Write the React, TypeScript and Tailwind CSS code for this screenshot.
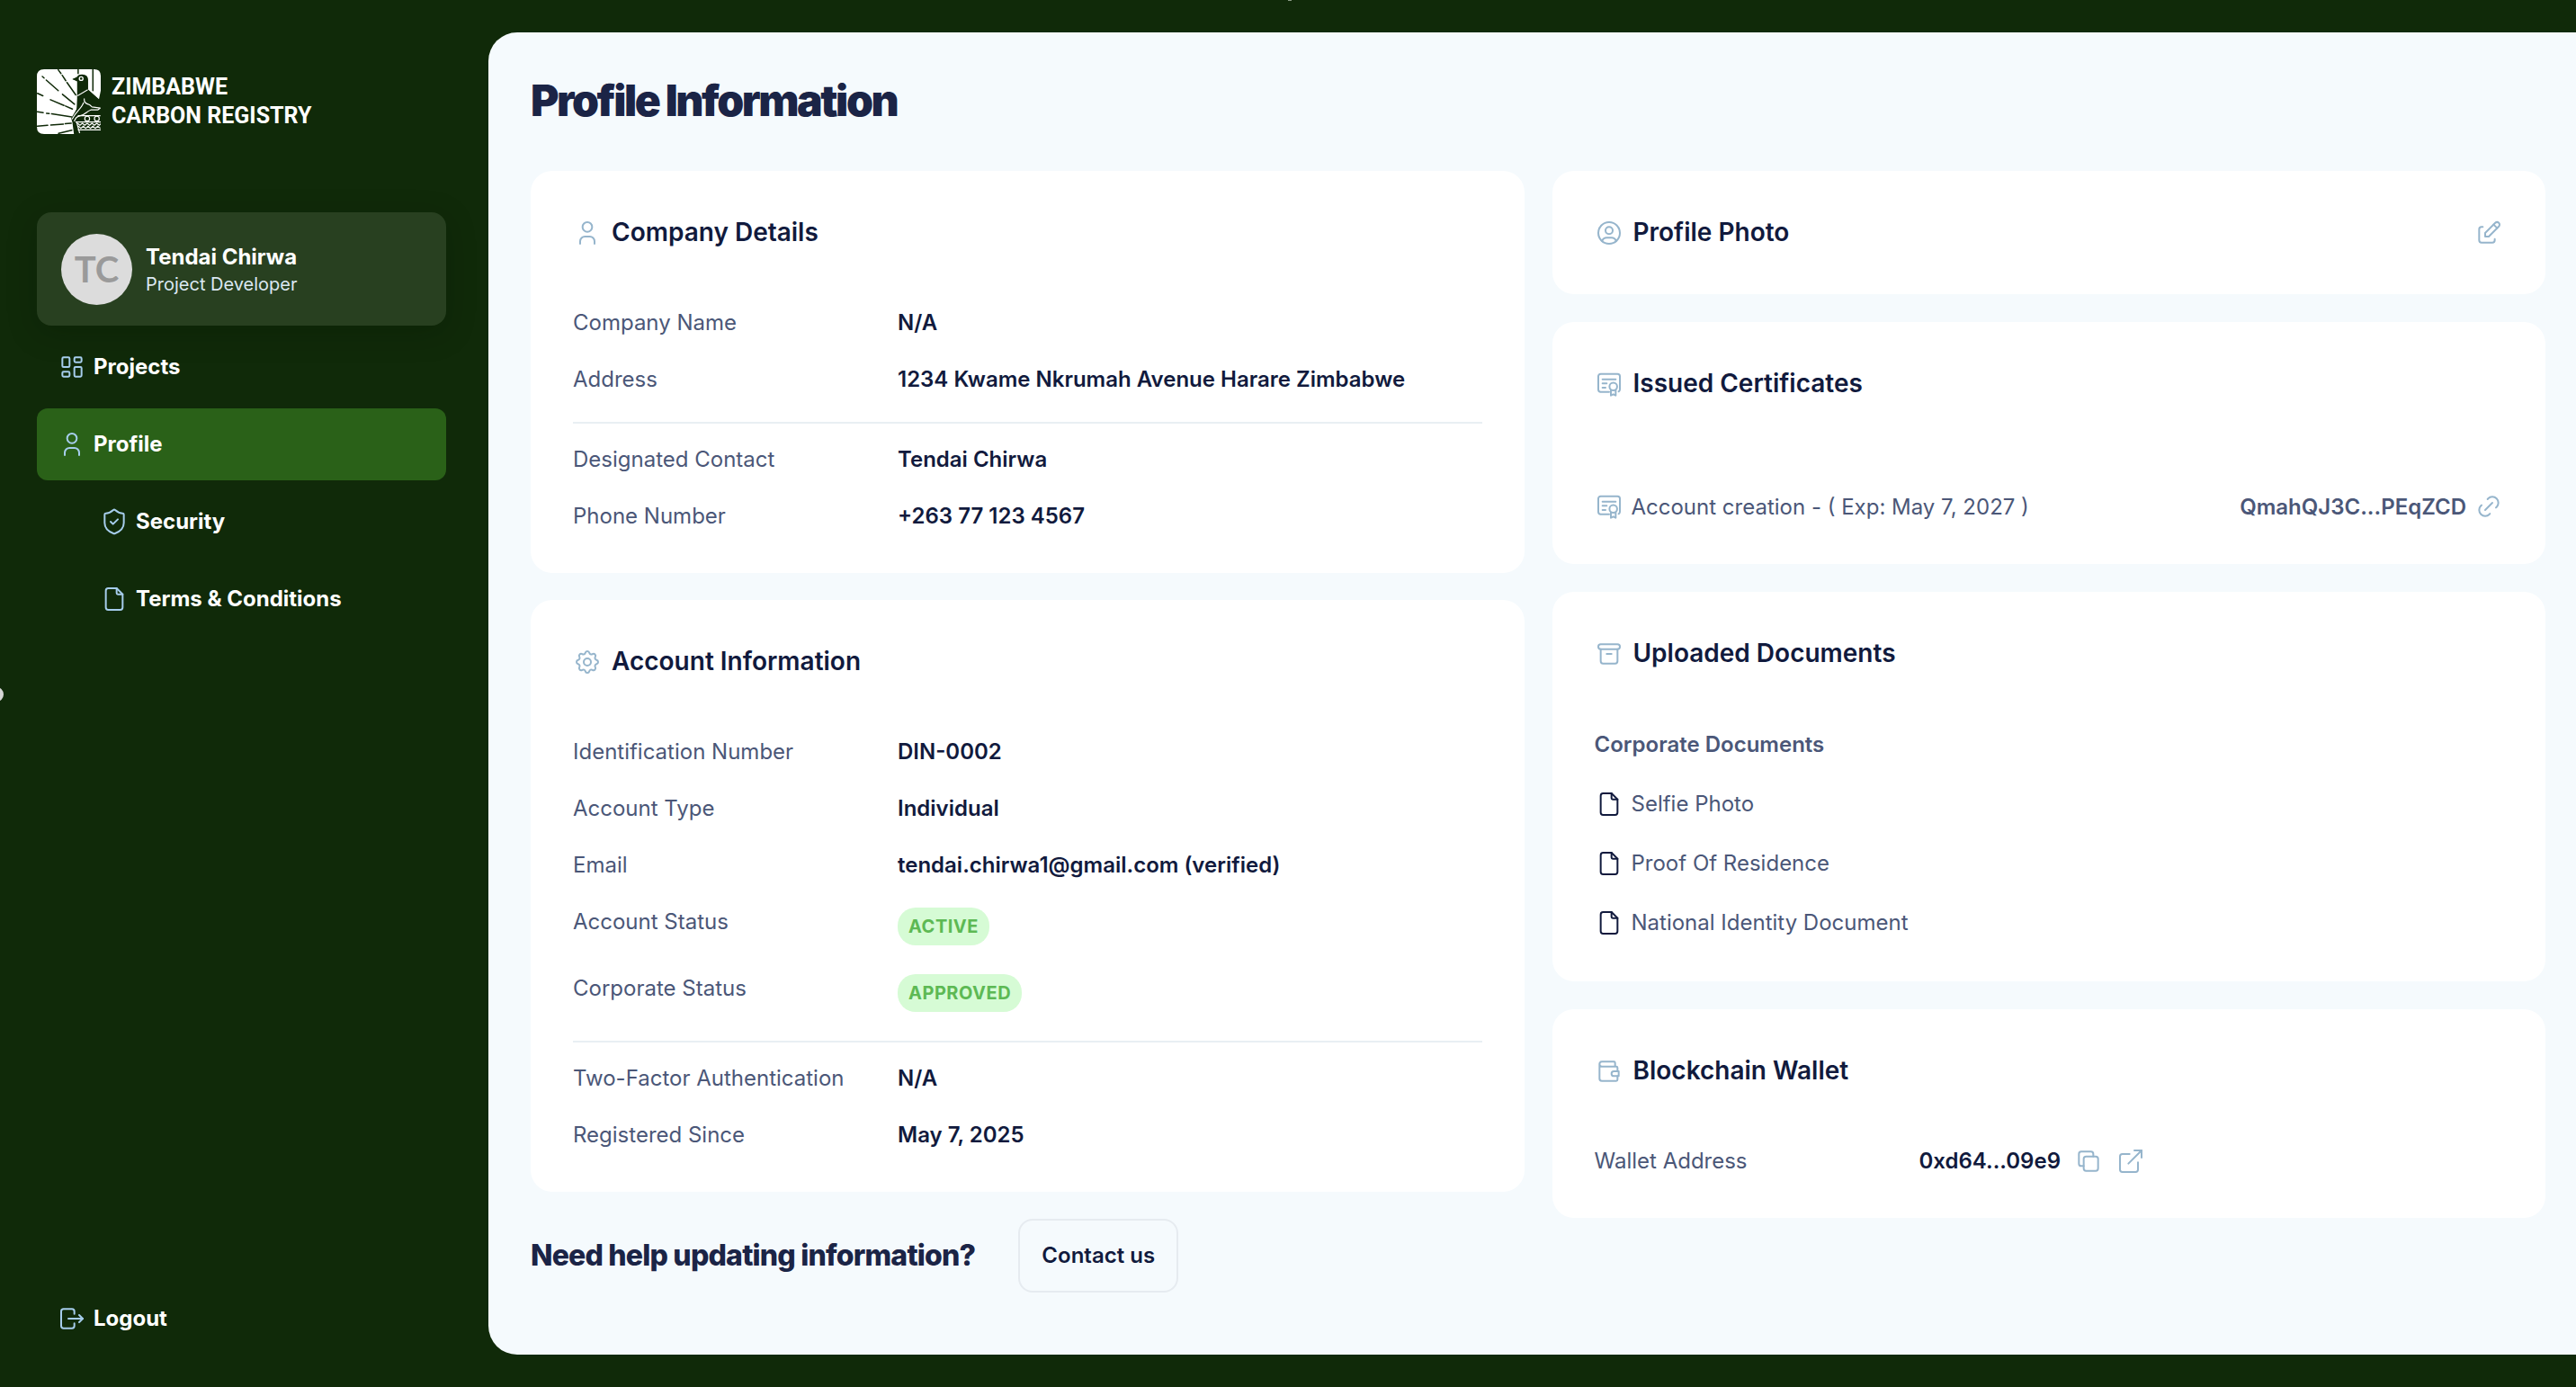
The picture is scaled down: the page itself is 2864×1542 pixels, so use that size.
import React from 'react';
import type { IconType } from 'react-icons';
import {
  TbArchive,
  TbEdit,
  TbFile,
  TbLayoutDashboard,
  TbLink,
  TbLogout,
  TbSettings,
  TbUser,
  TbUserCircle,
  TbWallet,
} from 'react-icons/tb';
import { ExternalLink, ShieldCheck } from 'lucide-react';

type IconLike = IconType | React.ComponentType<any>;

function CertificateIcon({ className }: { className?: string }) {
  return (
    <svg viewBox="0 0 24 24" fill="none" stroke="currentColor" strokeWidth="1.5" strokeLinecap="round" strokeLinejoin="round" className={className}>
      <path d="M12 18.5H5a2 2 0 0 1 -2 -2V5.500a2 2 0 0 1 2 -2h14a2 2 0 0 1 2 2v11a2 2 0 0 1 -1 1.700" />
      <path d="M6.500 8h11M6.500 11.500h3.500M6.500 15h2.500" />
      <circle cx="15.500" cy="14" r="3.200" />
      <path d="M13.500 17v4.500l2 -1l2 1v-4.500" />
    </svg>
  );
}

function CopyIcon({ className }: { className?: string }) {
  return (
    <svg viewBox="0 0 24 24" fill="none" stroke="currentColor" strokeWidth="1.5" strokeLinecap="round" strokeLinejoin="round" className={className}>
      <rect x="8" y="8" width="12" height="12" rx="2" />
      <path d="M16 8v-2a2 2 0 0 0 -2 -2h-8a2 2 0 0 0 -2 2v8a2 2 0 0 0 2 2h2" />
    </svg>
  );
}

function Emblem() {
  return (
    <svg viewBox="32 33 212 215" className="w-[71px] h-[72px] shrink-0" fill="none" aria-hidden="true">
      {/* sun plate */}
      <path
        d="M56 33H222Q244 33 244 55V104L238 133L202 100V68Q202 50 182 50Q168 50 166 60L150 66L166 72V130L164 166L146 196L150 210L155 248H56Q32 248 32 224V57Q32 33 56 33Z"
        fill="#fff"
      />
      {/* rays */}
      <g stroke="#102a09" strokeWidth="4.500" strokeLinecap="round">
        <path d="M103 35L112 47M116 53L128 71M132 77L161 118" />
        <path d="M50 57L56 62M63 69L103 104M117 116L157 149" />
        <path d="M34 113L52 121M77 134L122 153M127 155L150 165" />
        <path d="M34 174L53 177M64 179L73 180M81 181L148 191" />
        <path d="M34 222L68 219M78 218L120 215M126 214L146 212" />
        <path d="M104 246L148 235M169 34V47M218 34V104" />
      </g>
      {/* bird */}
      <path d="M150 66L164 59Q169 51 180 51Q200 51 201 71V101L242 136V155H214L240 164L215 172L158 207L150 197L166 160V73Z" fill="#102a09" />
      <circle cx="179" cy="64" r="6" stroke="#fff" strokeWidth="4" />
      <path d="M167 121L201 101" stroke="#fff" strokeWidth="3" />
      <path d="M189 130C188 144 195 147 207 151L215 158L242 162L234 168L211 168C196 173 193 185 176 187C164 189 160 194 156 206M187 143C181 164 163 170 149 199" stroke="#fff" strokeWidth="3.500" strokeLinejoin="round" />
      {/* plinth */}
      <path d="M168 187H243M160 208H244M168 234H244M164 208L174 245" stroke="#fff" strokeWidth="3.500" />
      <circle cx="199" cy="197" r="8" stroke="#fff" strokeWidth="3.500" />
      <circle cx="231" cy="197" r="8" stroke="#fff" strokeWidth="3.500" />
      <path d="M167 212L175 219L183 212L191 219L199 212L207 219L215 212L223 219L231 212L239 219L244 214M170 222L178 229L186 222L194 229L202 222L210 229L218 222L226 229L234 222L243 229" stroke="#fff" strokeWidth="3.500" />
    </svg>
  );
}

function NavItem({ icon: Icon, label, active, nested }: { icon: IconLike; label: string; active?: boolean; nested?: boolean }) {
  return (
    <a
      href="#"
      aria-current={active ? 'page' : undefined}
      className={`flex items-center gap-2 h-20 rounded-xl text-2xl font-bold text-white ${nested ? 'pl-[70px]' : 'pl-[23px]'} ${active ? 'bg-[#2a6118]' : ''}`}
    >
      <Icon className="w-8 h-8 text-[#a6cdec]" strokeWidth={1.5} />
      {label}
    </a>
  );
}

function Card({ icon: Icon, title, action, children }: { icon: IconLike; title: string; action?: React.ReactNode; children?: React.ReactNode }) {
  return (
    <section className="bg-white rounded-3xl">
      <div className="flex items-center gap-[11px] px-[47px] py-12 text-[#111a3d]">
        <Icon className="w-8 h-8 text-[#96b5cc]" strokeWidth={1.5} />
        <h2 className="flex-1 text-[28px] leading-[41px] font-semibold">{title}</h2>
        {action}
      </div>
      {children && <div className="px-[47px] pb-8">{children}</div>}
    </section>
  );
}

function Row({ label, children }: { label: string; children: React.ReactNode }) {
  return (
    <div className="flex py-4 text-2xl leading-[31px]">
      <dt className="w-[361px] shrink-0 text-[#4b5778]">{label}</dt>
      <dd className="font-semibold text-[#111a3d]">{children}</dd>
    </div>
  );
}

function Badge({ children }: { children: React.ReactNode }) {
  return (
    <span className="block px-3 rounded-[20px] bg-[#d6fbd5] text-xl leading-[42px] font-bold tracking-wide text-[#5db954]">
      {children}
    </span>
  );
}

const documents = ['Selfie Photo', 'Proof Of Residence', 'National Identity Document'];

export default function App() {
  return (
    <div className="relative min-h-screen flex py-9 bg-[#102a09] font-['Inter',sans-serif]">
      {/* window edge handles */}
      <span className="absolute -left-3 top-[764px] w-4 h-4 rounded-full border-4 border-[#d5d5d5] bg-[#8a8a8a]" />
      <span className="absolute left-1/2 top-0 w-1 h-px bg-[#8a9a86]" />

      <aside className="w-[543px] shrink-0 flex flex-col pl-[41px] pr-[47px] pt-[41px]">
        <div className="flex items-center gap-3 text-white">
          <Emblem />
          <p className="font-['Roboto',sans-serif] text-[25px] leading-8 font-bold">
            ZIMBABWE
            <br />
            CARBON REGISTRY
          </p>
        </div>

        <div className="mt-[87px] mb-[6px] flex items-center gap-[15px] h-[126px] px-[27px] rounded-2xl bg-[#284020] shadow-[0_8px_32px_rgba(0,20,0,0.250)]">
          <div className="w-[79px] h-[79px] rounded-full bg-[#dcdcdc] flex items-center justify-center font-['Lato',sans-serif] text-[40px] font-bold text-[#9a9a9a]">
            TC
          </div>
          <div className="pt-[3px]">
            <p className="text-2xl leading-[30px] font-bold text-white">Tendai Chirwa</p>
            <p className="text-xl leading-[30px] text-[#dbe8f2]">Project Developer</p>
          </div>
        </div>

        <nav className="flex flex-1 flex-col gap-[6px]">
          <NavItem icon={TbLayoutDashboard} label="Projects" />
          <NavItem icon={TbUser} label="Profile" active />
          <NavItem icon={ShieldCheck} label="Security" nested />
          <NavItem icon={TbFile} label="Terms & Conditions" nested />
          <div className="mt-auto">
            <NavItem icon={TbLogout} label="Logout" />
          </div>
        </nav>
      </aside>

      <main className="flex-1 rounded-l-[32px] bg-[#f5fafd] pl-[47px] pr-[34px] pt-12 pb-16">
        <h1 className="text-5xl leading-[56px] font-black tracking-tighter text-[#1b2446]">Profile Information</h1>

        <div className="mt-[50px] grid grid-cols-2 gap-[31px] items-start">
          <div className="flex flex-col gap-[30px]">
            <Card icon={TbUser} title="Company Details">
              <dl>
                <Row label="Company Name">N/A</Row>
                <Row label="Address">1234 Kwame Nkrumah Avenue Harare Zimbabwe</Row>
              </dl>
              <hr className="mt-4 mb-2 border-t-2 border-[#e9eff3]" />
              <dl>
                <Row label="Designated Contact">Tendai Chirwa</Row>
                <Row label="Phone Number">+263 77 123 4567</Row>
              </dl>
            </Card>

            <Card icon={TbSettings} title="Account Information">
              <dl>
                <Row label="Identification Number">DIN-0002</Row>
                <Row label="Account Type">Individual</Row>
                <Row label="Email">tendai.chirwa1@gmail.com (verified)</Row>
                <Row label="Account Status">
                  <Badge>ACTIVE</Badge>
                </Row>
                <Row label="Corporate Status">
                  <Badge>APPROVED</Badge>
                </Row>
              </dl>
              <hr className="mt-4 mb-2 border-t-2 border-[#e9eff3]" />
              <dl>
                <Row label="Two-Factor Authentication">N/A</Row>
                <Row label="Registered Since">May 7, 2025</Row>
              </dl>
            </Card>

            <div className="flex items-center gap-12">
              <p className="text-[32px] leading-10 font-extrabold tracking-tight text-[#1b2446]">Need help updating information?</p>
              <button type="button" className="h-[82px] px-6 rounded-2xl border-2 border-[#e6ebf0] text-2xl font-semibold text-[#111a3d]">
                Contact us
              </button>
            </div>
          </div>

          <div className="flex flex-col gap-[31px]">
            <Card
              icon={TbUserCircle}
              title="Profile Photo"
              action={
                <button type="button" aria-label="Edit photo" className="text-[#96b5cc]">
                  <TbEdit className="w-8 h-8" strokeWidth={1.5} />
                </button>
              }
            />

            <Card icon={CertificateIcon} title="Issued Certificates">
              <div className="mt-9 flex items-center gap-[9px] py-4 text-2xl leading-[31px] text-[#4b5778]">
                <CertificateIcon className="w-8 h-8 text-[#96b5cc]" />
                <span className="flex-1">Account creation - ( Exp: May 7, 2027 )</span>
                <a href="#" className="flex items-center gap-[9px] font-semibold">
                  QmahQJ3C...PEqZCD
                  <TbLink className="w-8 h-8 text-[#96b5cc]" strokeWidth={1.5} />
                </a>
              </div>
            </Card>

            <Card icon={TbArchive} title="Uploaded Documents">
              <h3 className="py-4 text-2xl leading-[34px] font-semibold text-[#4b5778]">Corporate Documents</h3>
              <ul>
                {documents.map((name) => (
                  <li key={name} className="py-4">
                    <a href="#" className="flex items-center gap-[9px] text-2xl leading-[34px] text-[#4b5778]">
                      <TbFile className="w-8 h-8 text-[#111a3d]" strokeWidth={1.5} />
                      {name}
                    </a>
                  </li>
                ))}
              </ul>
            </Card>

            <Card icon={TbWallet} title="Blockchain Wallet">
              <dl>
                <Row label="Wallet Address">
                  <span className="flex items-center gap-[15px] h-[31px]">
                    0xd64...09e9
                    <button type="button" aria-label="Copy address" className="text-[#96b5cc]">
                      <CopyIcon className="w-8 h-8" />
                    </button>
                    <a href="#" aria-label="Open in explorer" className="text-[#96b5cc]">
                      <ExternalLink className="w-8 h-8" strokeWidth={1.5} />
                    </a>
                  </span>
                </Row>
              </dl>
            </Card>
          </div>
        </div>
      </main>
    </div>
  );
}
